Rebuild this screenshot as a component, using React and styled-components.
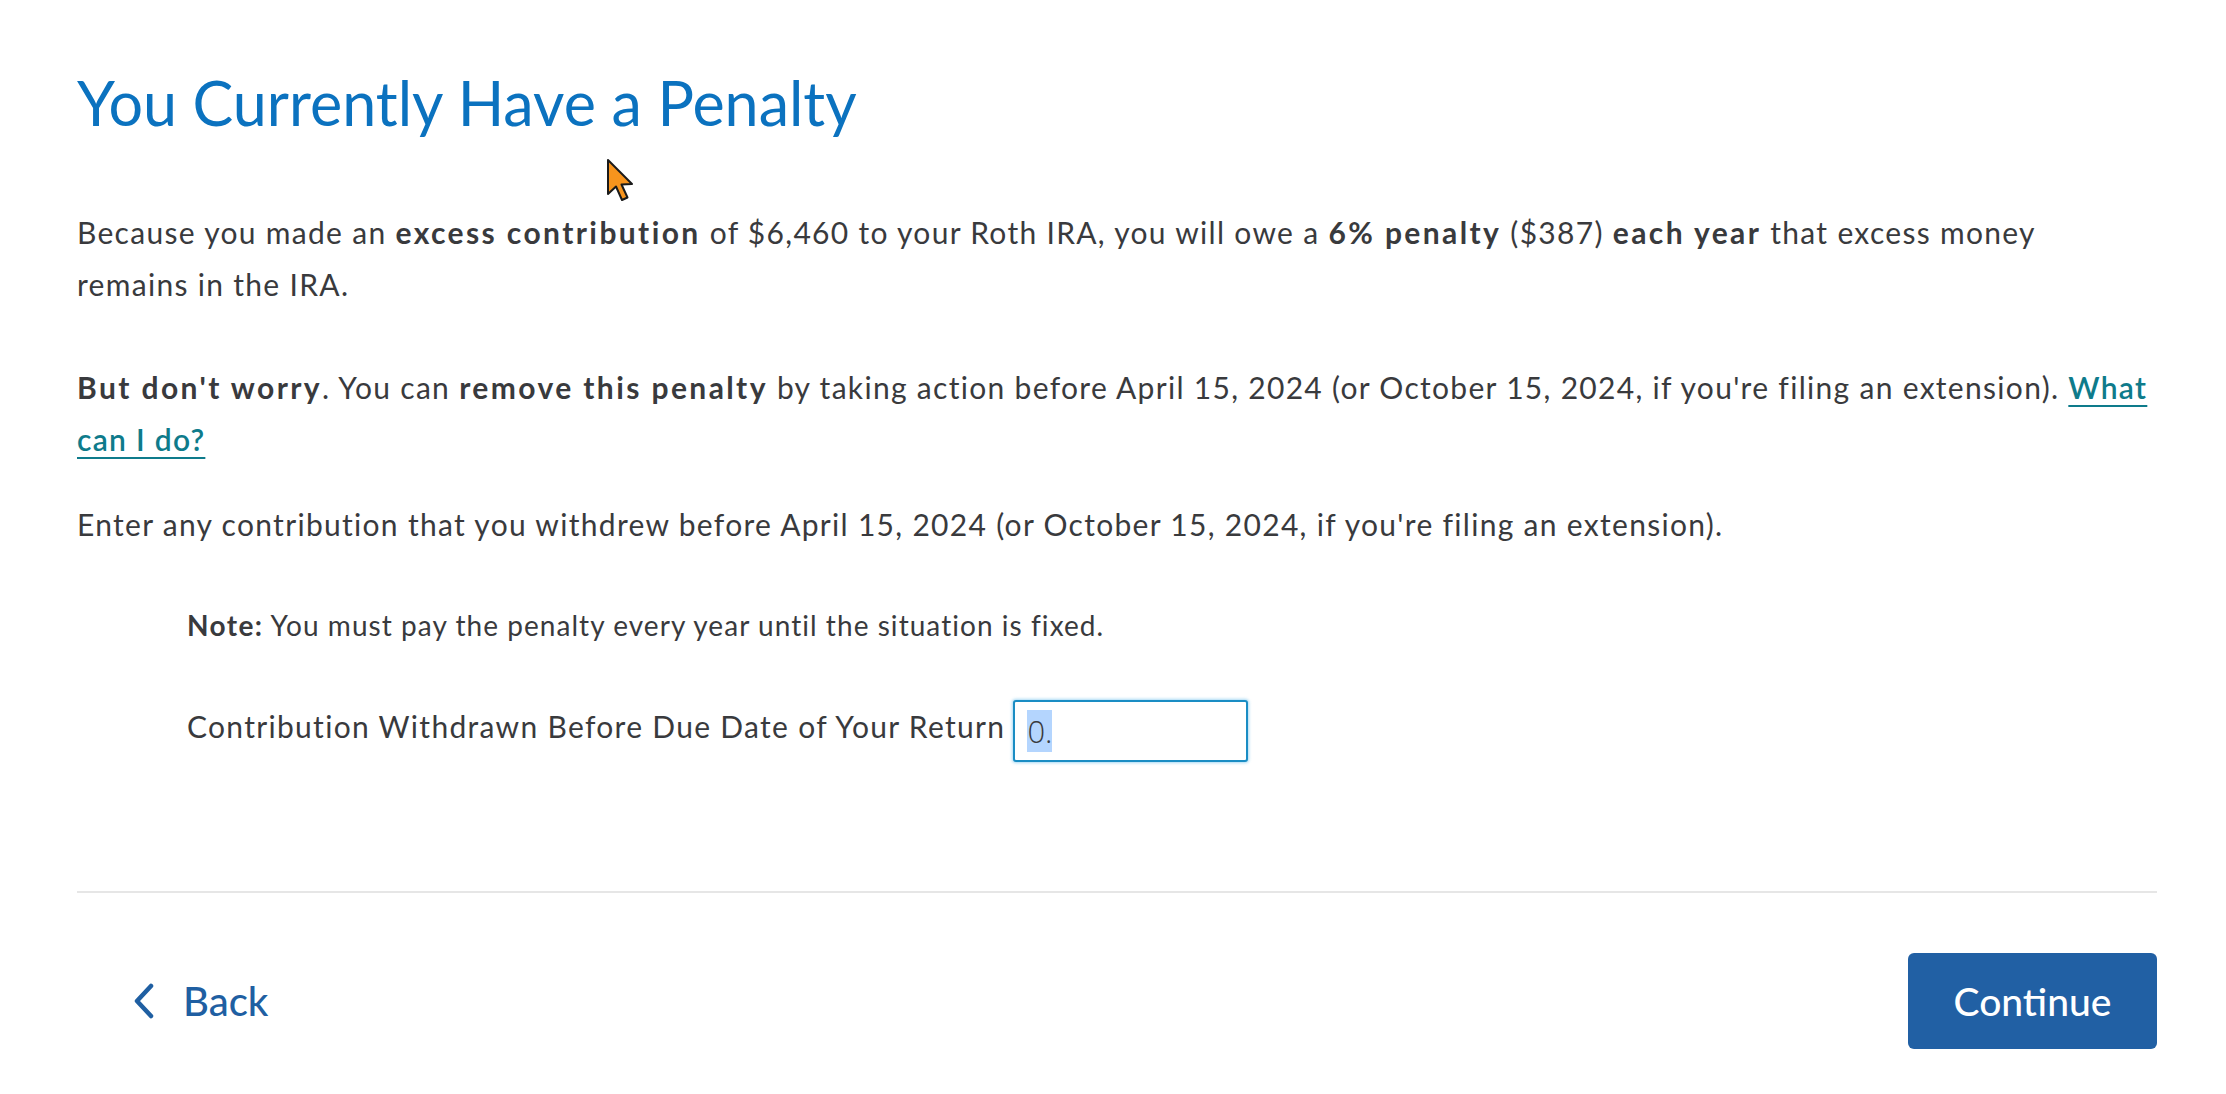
import React, { useEffect, useRef } from "react";
import styled, { createGlobalStyle } from "styled-components";

const GlobalStyle = createGlobalStyle`
  html, body {
    margin: 0;
    padding: 0;
    background: #ffffff;
  }
  body {
    font-family: "Lato", "Noto Sans", sans-serif;
    color: #393a3d;
  }
  * { box-sizing: border-box; }
`;

const Page = styled.main`
  position: relative;
  padding: 66px 69px 40px 77px;
  min-height: 1094px;
`;

const Title = styled.h1`
  margin: 0;
  font-size: 61px;
  line-height: 74px;
  font-weight: 400;
  color: #0b72bf;
`;

const Paragraph = styled.p`
  margin: 0;
  margin-top: ${(p) => p.$top || 0}px;
  max-width: 2074px;
  padding-left: ${(p) => p.$indent || 0}px;
  font-size: ${(p) => (p.$small ? 28 : 30)}px;
  letter-spacing: ${(p) => (p.$small ? 1.05 : 1.3)}px;
  line-height: 52px;
  color: #393a3d;

  b {
    font-weight: 700;
    letter-spacing: ${(p) => (p.$small ? 1.4 : 2.4)}px;
    color: #393a3d;
  }
`;

const HelpLink = styled.a`
  color: #0e7b8b;
  font-weight: 600;
  letter-spacing: 1.3px;
  text-decoration: underline;
  text-decoration-thickness: 2px;
  text-underline-offset: 6px;
  cursor: pointer;
`;

const FieldRow = styled.div`
  display: flex;
  align-items: flex-start;
  gap: 8px;
  margin-top: 49px;
  padding-left: 110px;
`;

const FieldLabel = styled.label`
  font-size: 30px;
  letter-spacing: 1.3px;
  line-height: 52px;
  color: #393a3d;
`;

const AmountInput = styled.input`
  width: 235px;
  height: 62px;
  padding: 0 12px;
  border: 2px solid #1a8dc4;
  border-radius: 3px;
  box-shadow: 0 0 3px 1px rgba(60, 170, 230, 0.45);
  font-family: "Open Sans", "Noto Sans", sans-serif;
  font-weight: 300;
  font-size: 31px;
  color: #393a3d;
  outline: none;
  background: #fff;

  &::selection {
    background: #b4d5fe;
    color: #393a3d;
  }
`;

const Divider = styled.hr`
  margin: 129px 0 0;
  border: 0;
  height: 2px;
  background: #e6e6e6;
`;

const Footer = styled.div`
  display: flex;
  justify-content: space-between;
  align-items: center;
  margin-top: 60px;
`;

const BackButton = styled.button`
  display: flex;
  align-items: center;
  gap: 28px;
  height: 96px;
  padding: 0 0 0 56px;
  border: 0;
  background: transparent;
  font-family: "Lato", "Noto Sans", sans-serif;
  font-size: 40px;
  font-weight: 500;
  color: #1f5fa2;
  cursor: pointer;

  svg {
    display: block;
  }
`;

const PrimaryButton = styled.button`
  height: 96px;
  padding: 0 40px;
  min-width: 249px;
  border: 0;
  border-radius: 6px;
  background: #2160a4;
  font-family: "Lato", "Noto Sans", sans-serif;
  font-size: 39px;
  font-weight: 500;
  color: #ffffff;
  cursor: pointer;
`;

const Pointer = styled.svg`
  position: absolute;
  left: 606px;
  top: 158px;
  pointer-events: none;
`;

export default function App() {
  const inputRef = useRef(null);

  useEffect(() => {
    const el = inputRef.current;
    if (el) {
      el.focus();
      el.setSelectionRange(0, el.value.length);
    }
  }, []);

  return (
    <>
      <GlobalStyle />
      <Page>
        <Title>You Currently Have a Penalty</Title>

        <Paragraph $top={66}>
          Because you made an <b>excess contribution</b> of $6,460 to your Roth
          IRA, you will owe a <b>6% penalty</b> ($387) <b>each year</b> that
          excess money remains in the IRA.
        </Paragraph>

        <Paragraph $top={51}>
          <b>But don't worry</b>. You can <b>remove this penalty</b> by taking
          action before April 15, 2024 (or October 15, 2024, if you're filing an
          extension). <HelpLink>What can I do?</HelpLink>
        </Paragraph>

        <Paragraph $top={33}>
          Enter any contribution that you withdrew before April 15, 2024 (or
          October 15, 2024, if you're filing an extension).
        </Paragraph>

        <Paragraph $top={49} $indent={110} $small>
          <b>Note:</b> You must pay the penalty every year until the situation
          is fixed.
        </Paragraph>

        <FieldRow>
          <FieldLabel htmlFor="withdrawn">
            Contribution Withdrawn Before Due Date of Your Return
          </FieldLabel>
          <AmountInput
            id="withdrawn"
            ref={inputRef}
            defaultValue="0."
            type="text"
          />
        </FieldRow>

        <Divider />

        <Footer>
          <BackButton type="button">
            <svg width="22" height="36" viewBox="0 0 22 36" fill="none">
              <path
                d="M18 3 L4 18 L18 33"
                stroke="#1f5fa2"
                strokeWidth="4.5"
                strokeLinecap="round"
                strokeLinejoin="round"
              />
            </svg>
            Back
          </BackButton>
          <PrimaryButton type="button">Continue</PrimaryButton>
        </Footer>

        <Pointer width="30" height="46" viewBox="0 0 30 46">
          <path
            d="M2 2 L2 36 L10 28.5 L16 42 L21.5 39.5 L15.5 26.5 L26 26 Z"
            fill="#f7941d"
            stroke="#1a1a1a"
            strokeWidth="2"
            strokeLinejoin="round"
          />
        </Pointer>
      </Page>
    </>
  );
}
